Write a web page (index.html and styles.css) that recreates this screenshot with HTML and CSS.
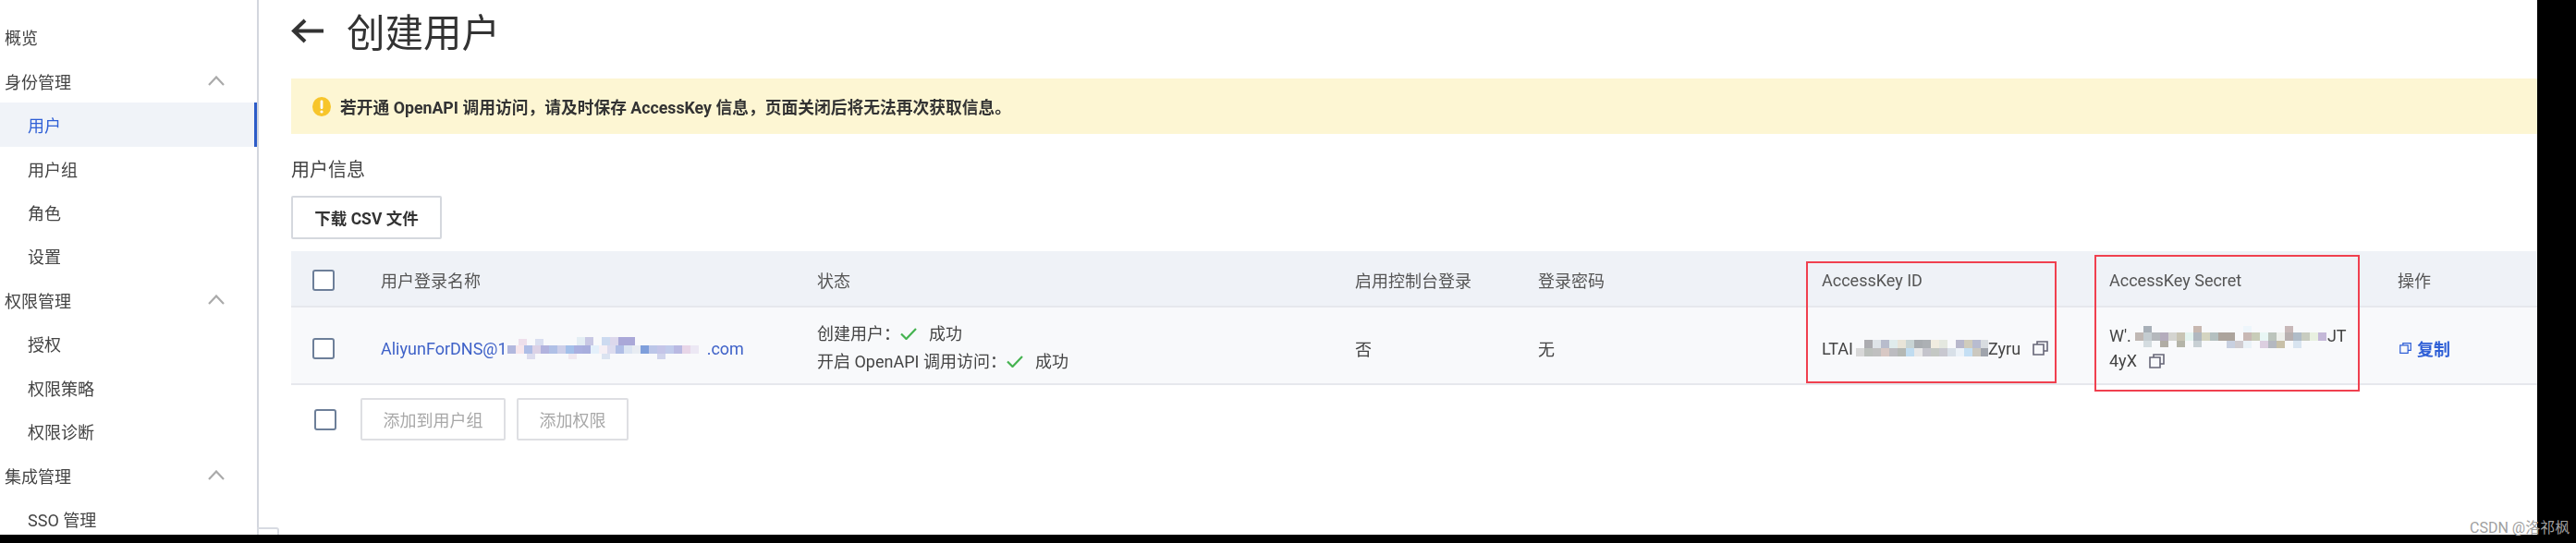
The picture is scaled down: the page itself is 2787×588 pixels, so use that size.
FILE: index.html
```html
<!DOCTYPE html>
<html lang="zh-CN">
<head>
    <meta charset="UTF-8">
    <title>创建用户</title>
    <link rel="stylesheet" href="styles.css">
</head>
<body>
    <div class="screen">
        <!-- Sidebar -->
        <nav class="sidebar">
            <div class="nav-group">概览</div>
            <div class="nav-group">身份管理
                <svg class="chevron" viewBox="0 0 18 11"><polyline points="1,10 9,1.5 17,10"/></svg>
            </div>
            <div class="nav-item active">用户</div>
            <div class="nav-item">用户组</div>
            <div class="nav-item">角色</div>
            <div class="nav-item">设置</div>
            <div class="nav-group">权限管理
                <svg class="chevron" viewBox="0 0 18 11"><polyline points="1,10 9,1.5 17,10"/></svg>
            </div>
            <div class="nav-item">授权</div>
            <div class="nav-item">权限策略</div>
            <div class="nav-item">权限诊断</div>
            <div class="nav-group">集成管理
                <svg class="chevron" viewBox="0 0 18 11"><polyline points="1,10 9,1.5 17,10"/></svg>
            </div>
            <div class="nav-item">SSO 管理</div>
        </nav>
        <div class="collapse-tab"></div>

        <!-- Main Content -->
        <main class="content">
            <div class="page-title">
                <svg class="back-arrow" viewBox="0 0 35 27"><path d="M35 13.5H3M15 2L3 13.5L15 25"/></svg>
                <h1>创建用户</h1>
            </div>

            <div class="alert">
                <svg class="alert-icon" viewBox="0 0 20 21">
                    <ellipse cx="10" cy="10.5" rx="10" ry="10.5" fill="#f7c52b"/>
                    <rect x="8.6" y="3.5" width="2.8" height="9.5" rx="1.2" fill="#fff"/>
                    <circle cx="10" cy="16" r="1.6" fill="#fff"/>
                </svg>
                <span>若开通 OpenAPI 调用访问，请及时保存 AccessKey 信息，页面关闭后将无法再次获取信息。</span>
            </div>

            <div class="section-label">用户信息</div>
            <button class="btn-download">下载 CSV 文件</button>

            <div class="table">
                <div class="table-row table-head">
                    <div><span class="check"></span></div>
                    <div>用户登录名称</div>
                    <div>状态</div>
                    <div>启用控制台登录</div>
                    <div>登录密码</div>
                    <div>AccessKey ID</div>
                    <div>AccessKey Secret</div>
                    <div>操作</div>
                </div>
                <div class="table-row table-body">
                    <div><span class="check"></span></div>
                    <div class="user-link">AliyunForDNS@1<svg class="mosaic mosaic-user" viewBox="0 0 207 27">
                        <g>
                            <rect x="0" y="10" width="9" height="9" fill="#b2b8de"/><rect x="9" y="10" width="9" height="9" fill="#f6e6ec"/><rect x="18" y="10" width="9" height="9" fill="#aebde6"/><rect x="27" y="10" width="9" height="9" fill="#dcd2e6"/><rect x="36" y="10" width="9" height="9" fill="#b2b3de"/><rect x="45" y="10" width="9" height="9" fill="#b0c0e6"/><rect x="54" y="10" width="9" height="9" fill="#cdcfe9"/><rect x="63" y="10" width="9" height="9" fill="#a4c0ea"/><rect x="72" y="10" width="9" height="9" fill="#aab0e0"/><rect x="81" y="10" width="9" height="9" fill="#a8aedd"/><rect x="90" y="10" width="9" height="9" fill="#e4f0fb"/><rect x="99" y="10" width="9" height="9" fill="#f5eff5"/><rect x="108" y="10" width="9" height="9" fill="#dcdcef"/><rect x="117" y="10" width="9" height="9" fill="#b0bee6"/><rect x="126" y="10" width="9" height="9" fill="#dbe4f2"/><rect x="135" y="10" width="9" height="9" fill="#e8ecf2"/><rect x="144" y="10" width="9" height="9" fill="#7f9fdb"/><rect x="153" y="10" width="9" height="9" fill="#bcc6e8"/><rect x="162" y="10" width="9" height="9" fill="#c4c5e8"/><rect x="171" y="10" width="9" height="9" fill="#c1cbeb"/><rect x="180" y="10" width="9" height="9" fill="#b9b9e2"/><rect x="189" y="10" width="9" height="9" fill="#e8d6e8"/><rect x="198" y="10" width="9" height="9" fill="#ece8f4"/>
                            <rect x="12" y="3" width="9" height="7" fill="#eedfeb"/><rect x="30" y="3" width="9" height="7" fill="#d9def0"/><rect x="75" y="1" width="9" height="9" fill="#e4eef4"/><rect x="84" y="1" width="9" height="9" fill="#c8c8e4"/><rect x="102" y="1" width="9" height="9" fill="#ccdaf0"/><rect x="111" y="1" width="9" height="9" fill="#dcd8ec"/><rect x="120" y="1" width="18" height="9" fill="#aaa8d8"/>
                            <rect x="21" y="19" width="9" height="6" fill="#dcdcee"/><rect x="66" y="19" width="9" height="6" fill="#f0e8f0"/><rect x="102" y="19" width="9" height="6" fill="#dbe3f1"/><rect x="162" y="19" width="9" height="6" fill="#d0d4ec"/>
                        </g>
                    </svg>.com</div>
                    <div class="status-cell">
                        <div>创建用户：<svg class="tick" viewBox="0 0 18 13"><polyline points="1,6.5 6.5,12 17,1"/></svg>成功</div>
                        <div>开启 OpenAPI 调用访问：<svg class="tick" viewBox="0 0 18 13"><polyline points="1,6.5 6.5,12 17,1"/></svg>成功</div>
                    </div>
                    <div>否</div>
                    <div>无</div>
                    <div class="key-line">LTAI<svg class="mosaic mosaic-id" viewBox="0 0 143 20">
                        <rect x="0" y="10" width="9" height="9" fill="#d8d8d8"/><rect x="9" y="10" width="9" height="9" fill="#bcc0bc"/><rect x="18" y="10" width="9" height="9" fill="#c0c0c0"/><rect x="27" y="10" width="9" height="9" fill="#d8c8c4"/><rect x="36" y="10" width="9" height="9" fill="#bcbcc0"/><rect x="45" y="10" width="9" height="9" fill="#b4b8b4"/><rect x="54" y="10" width="9" height="9" fill="#c0dcf0"/><rect x="63" y="10" width="9" height="9" fill="#e8e8e8"/><rect x="72" y="10" width="9" height="9" fill="#c4c4cc"/><rect x="81" y="10" width="9" height="9" fill="#c4c8c4"/><rect x="90" y="10" width="9" height="9" fill="#c8c8d0"/><rect x="99" y="10" width="9" height="9" fill="#d8e0e8"/><rect x="108" y="10" width="9" height="9" fill="#ecf2f8"/><rect x="117" y="10" width="9" height="9" fill="#c4dff4"/><rect x="126" y="10" width="9" height="9" fill="#cbc8bf"/><rect x="135" y="10" width="8" height="9" fill="#a0a4ac"/>
                        <rect x="9" y="1" width="9" height="9" fill="#acacb0"/><rect x="18" y="1" width="9" height="9" fill="#dfe4e8"/><rect x="27" y="1" width="9" height="9" fill="#b8bccc"/><rect x="36" y="1" width="9" height="9" fill="#e0ecec"/><rect x="45" y="1" width="9" height="9" fill="#e8e4d8"/><rect x="54" y="1" width="9" height="9" fill="#c8d4d4"/><rect x="63" y="1" width="9" height="9" fill="#a8acb0"/><rect x="72" y="1" width="9" height="9" fill="#acb0b4"/><rect x="81" y="1" width="9" height="9" fill="#f0ece0"/><rect x="90" y="1" width="9" height="9" fill="#e4e8e0"/><rect x="108" y="1" width="9" height="9" fill="#b8b8cc"/><rect x="117" y="1" width="9" height="9" fill="#d0ccbc"/><rect x="126" y="1" width="9" height="9" fill="#b8bcd0"/><rect x="135" y="1" width="8" height="9" fill="#d8dce0"/>
                    </svg>Zyru
                        <svg class="copy-icon" viewBox="0 0 17 16"><path d="M5 4V1H16V11H12M1 4H12V15H1Z"/></svg>
                    </div>
                    <div class="secret-cell">
                        <div class="key-line">W'.<svg class="mosaic mosaic-secret" viewBox="0 0 208 32">
                            <rect x="0" y="8" width="9" height="9" fill="#c0b8b4"/><rect x="9" y="8" width="9" height="9" fill="#c4ccd0"/><rect x="18" y="8" width="9" height="9" fill="#b4b8bc"/><rect x="27" y="8" width="9" height="9" fill="#b4acbc"/><rect x="36" y="8" width="9" height="9" fill="#d4d4d0"/><rect x="45" y="8" width="9" height="9" fill="#c8c4b4"/><rect x="54" y="8" width="9" height="9" fill="#e4f4f0"/><rect x="63" y="8" width="9" height="9" fill="#b0b8c0"/><rect x="72" y="8" width="9" height="9" fill="#d4d4c0"/><rect x="81" y="8" width="9" height="9" fill="#b4c0c0"/><rect x="90" y="8" width="18" height="9" fill="#aca49c"/><rect x="117" y="8" width="9" height="9" fill="#c8b8b4"/><rect x="126" y="8" width="9" height="9" fill="#c8ccb8"/><rect x="135" y="8" width="9" height="9" fill="#e8f6f4"/><rect x="144" y="8" width="9" height="9" fill="#bcc4bc"/><rect x="153" y="8" width="9" height="9" fill="#eef0ec"/><rect x="162" y="8" width="9" height="9" fill="#b8b0b0"/><rect x="171" y="8" width="9" height="9" fill="#b0bcc8"/><rect x="180" y="8" width="9" height="9" fill="#c8ccc0"/><rect x="189" y="8" width="9" height="9" fill="#e8f0e0"/><rect x="198" y="8" width="9" height="9" fill="#c4b8d8"/>
                            <rect x="9" y="1" width="9" height="7" fill="#a8b0b8"/><rect x="63" y="1" width="9" height="7" fill="#c8b8b0"/><rect x="117" y="1" width="9" height="7" fill="#eef6fb"/><rect x="162" y="1" width="9" height="7" fill="#c8b8b8"/>
                            <rect x="9" y="17" width="9" height="7" fill="#d4dce0"/><rect x="27" y="17" width="9" height="7" fill="#b0aca4"/><rect x="45" y="17" width="9" height="7" fill="#b4b4a8"/><rect x="63" y="17" width="9" height="7" fill="#c8d0d4"/><rect x="99" y="17" width="9" height="8" fill="#c8d0e0"/><rect x="108" y="17" width="9" height="8" fill="#d0ccd0"/><rect x="117" y="17" width="9" height="8" fill="#eaf2f8"/><rect x="135" y="17" width="9" height="8" fill="#dccfe0"/><rect x="144" y="17" width="9" height="8" fill="#b4b8c0"/><rect x="153" y="17" width="9" height="8" fill="#c8c0a8"/><rect x="171" y="17" width="9" height="8" fill="#d8e4f0"/>
                        </svg>JT</div>
                        <div class="key-line">4yX
                            <svg class="copy-icon" viewBox="0 0 17 16"><path d="M5 4V1H16V11H12M1 4H12V15H1Z"/></svg>
                        </div>
                    </div>
                    <div class="copy-link">
                        <svg class="copy-icon" viewBox="0 0 17 16"><path d="M5 4V1H16V11H12M1 4H12V15H1Z"/></svg>复制
                    </div>
                </div>
                <!-- Red marks on the screenshot -->
                <div class="mark mark-id"></div>
                <div class="mark mark-secret"></div>
            </div>

            <div class="table-actions">
                <span class="check"></span>
                <button class="btn-disabled btn-group">添加到用户组</button>
                <button class="btn-disabled btn-perm">添加权限</button>
            </div>
        </main>
    </div>
    <div class="watermark">CSDN @洛祁枫</div>
</body>
</html>
```

FILE: styles.css
```css
* {
    margin: 0;
    padding: 0;
    box-sizing: border-box;
    font-family: Roboto, 'Noto Sans CJK SC', sans-serif;
}

body {
    position: relative;
    height: 588px;
    background: #000;
    overflow: hidden;
}

.screen {
    position: relative;
    display: flex;
    width: 2745px;
    height: 579px;
    background: #fff;
    overflow: hidden;
    color: #444;
    font-size: 18px;
    filter: blur(0.4px);
}

/* Sidebar */
.sidebar {
    flex: none;
    width: 280px;
    padding-top: 16.5px;
    border-right: 2px solid #d3d6de;
}

.nav-group,
.nav-item {
    display: flex;
    align-items: center;
    justify-content: space-between;
    height: 47.45px;
    padding-left: 5px;
    padding-right: 35px;
    color: #444;
}

.nav-item {
    padding-left: 30px;
}

.nav-item.active {
    color: #2f5fd6;
    background: #f0f3f8;
    box-shadow: inset -3px 0 0 #2d5cc8;
}

.chevron {
    width: 18px;
    height: 11px;
    fill: none;
    stroke: #aaa;
    stroke-width: 2.2;
}

.collapse-tab {
    position: absolute;
    left: 278px;
    top: 571px;
    width: 24px;
    height: 10px;
    border: 2px solid #d8dbe2;
    border-radius: 0 3px 0 0;
}

/* Main Content */
.content {
    flex: 1;
    padding-left: 35px;
    min-width: 0;
}

.page-title {
    display: flex;
    align-items: center;
    height: 66px;
    gap: 25px;
    margin-bottom: 19px;
}

.back-arrow {
    width: 35px;
    height: 27px;
    fill: none;
    stroke: #333;
    stroke-width: 4;
}

.page-title h1 {
    font-size: 41.5px;
    font-weight: 400;
    color: #333;
}

.alert {
    display: flex;
    align-items: center;
    gap: 10px;
    height: 60px;
    padding-left: 23px;
    background: #fdf6d3;
    font-weight: 700;
    color: #333;
    font-size: 17.75px;
}

.alert-icon {
    width: 20px;
    height: 21px;
}

.section-label {
    margin-top: 26px;
    font-size: 20px;
    line-height: 26px;
    color: #444;
}

.btn-download {
    display: block;
    width: 163px;
    height: 47px;
    margin-top: 15px;
    background: #fff;
    border: 2px solid #d5d8de;
    border-radius: 2px;
    font-size: 17.5px;
    font-weight: 700;
    color: #333;
}

/* Table */
.table {
    position: relative;
    margin-top: 13px;
}

.table-row {
    display: grid;
    grid-template-columns: 97px 472px 582px 198px 307px 311px 312px 1fr;
    align-items: center;
}

.table-row > div:first-child {
    padding-left: 23px;
    display: flex;
}

.table-head {
    height: 61px;
    padding-top: 3px;
    background: #eff2f7;
    border-bottom: 2px solid #e6e8ed;
    color: #555;
}

.table-body {
    height: 84px;
    padding-top: 6px;
    background: #f8f9fb;
    border-bottom: 2px solid #e6e8ed;
}

.check {
    display: inline-block;
    flex: none;
    width: 24px;
    height: 23px;
    background: #fff;
    border: 2px solid #6d7f99;
    border-radius: 3px;
}

.user-link {
    display: flex;
    align-items: center;
    color: #3f62c8;
}

.mosaic {
    flex: none;
}

.mosaic-user {
    width: 207px;
    height: 27px;
    margin-right: 9px;
}

.mosaic-id {
    width: 143px;
    height: 20px;
    margin-left: 3px;
}

.mosaic-secret {
    width: 208px;
    height: 32px;
    margin-top: 8px;
    margin-left: 4px;
}

.status-cell {
    line-height: 30px;
}

.tick {
    width: 18px;
    height: 13px;
    margin-right: 13px;
    fill: none;
    stroke: #45b350;
    stroke-width: 2.2;
}

.key-line {
    display: flex;
    align-items: center;
    white-space: nowrap;
}

.secret-cell .key-line {
    height: 27px;
}

.copy-icon {
    flex: none;
    width: 17px;
    height: 16px;
    margin-left: 13px;
    fill: none;
    stroke: #667;
    stroke-width: 1.6;
}

.copy-link {
    display: flex;
    align-items: center;
    gap: 6px;
    color: #2f5fd6;
    font-weight: 700;
}

.copy-link .copy-icon {
    width: 13px;
    margin-left: 2px;
    stroke: #2f5fd6;
}

.mark {
    position: absolute;
    border: 2px solid #f0404f;
}

.mark-id {
    left: 1639px;
    top: 11px;
    width: 271px;
    height: 132px;
}

.mark-secret {
    left: 1951px;
    top: 4px;
    width: 287px;
    height: 148px;
}

.table-actions {
    display: flex;
    align-items: center;
    height: 46px;
    margin-top: 14px;
    padding-left: 25px;
}

.btn-disabled {
    height: 46px;
    background: #fff;
    border: 2px solid #dedfe3;
    border-radius: 2px;
    font-size: 18px;
    color: #a8a8a8;
}

.btn-group {
    width: 157px;
    margin-left: 26px;
}

.btn-perm {
    width: 121px;
    margin-left: 12px;
}

.watermark {
    position: absolute;
    left: 2672px;
    top: 561px;
    font-size: 16px;
    line-height: 22px;
    color: #a0a0a0;
    white-space: nowrap;
}
```
